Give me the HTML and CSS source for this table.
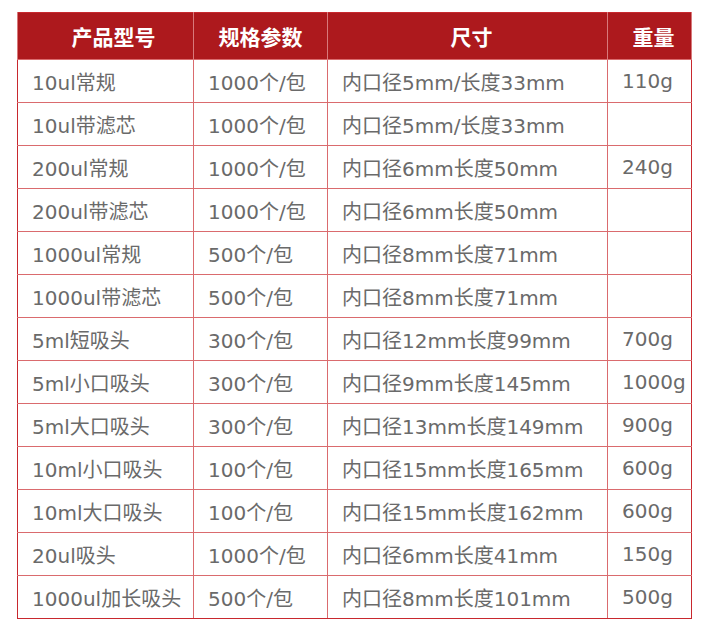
FILE: index.html
```html
<!DOCTYPE html>
<html lang="zh">
<head>
<meta charset="utf-8">
<link rel="stylesheet" href="styles.css">
</head>
<body>
<table class="spec">
  <colgroup>
    <col class="c1"><col class="c2"><col class="c3"><col class="c4">
  </colgroup>
  <thead>
    <tr><th class="h1">产品型号</th><th class="h2">规格参数</th><th class="h3">尺寸</th><th class="h4">重量</th></tr>
  </thead>
  <tbody>
    <tr><td>10ul常规</td><td>1000个/包</td><td>内口径5mm/长度33mm</td><td>110g</td></tr>
    <tr><td>10ul带滤芯</td><td>1000个/包</td><td>内口径5mm/长度33mm</td><td></td></tr>
    <tr><td>200ul常规</td><td>1000个/包</td><td>内口径6mm长度50mm</td><td>240g</td></tr>
    <tr><td>200ul带滤芯</td><td>1000个/包</td><td>内口径6mm长度50mm</td><td></td></tr>
    <tr><td>1000ul常规</td><td>500个/包</td><td>内口径8mm长度71mm</td><td></td></tr>
    <tr><td>1000ul带滤芯</td><td>500个/包</td><td>内口径8mm长度71mm</td><td></td></tr>
    <tr><td>5ml短吸头</td><td>300个/包</td><td>内口径12mm长度99mm</td><td>700g</td></tr>
    <tr><td>5ml小口吸头</td><td>300个/包</td><td>内口径9mm长度145mm</td><td>1000g</td></tr>
    <tr><td>5ml大口吸头</td><td>300个/包</td><td>内口径13mm长度149mm</td><td>900g</td></tr>
    <tr><td>10ml小口吸头</td><td>100个/包</td><td>内口径15mm长度165mm</td><td>600g</td></tr>
    <tr><td>10ml大口吸头</td><td>100个/包</td><td>内口径15mm长度162mm</td><td>600g</td></tr>
    <tr><td>20ul吸头</td><td>1000个/包</td><td>内口径6mm长度41mm</td><td>150g</td></tr>
    <tr><td>1000ul加长吸头</td><td>500个/包</td><td>内口径8mm长度101mm</td><td>500g</td></tr>
  </tbody>
</table>
</body>
</html>
```
FILE: styles.css
```css
html, body {
  margin: 0;
  background: #ffffff;
}
body {
  padding: 12px 0 0 17px;
  font-family: "Noto Sans CJK SC", "Noto Sans", sans-serif;
}
.spec {
  border-collapse: collapse;
  table-layout: fixed;
  width: 674px;
  border: 1px solid #c8282e;
}
.c1 { width: 176px; }
.c2 { width: 134px; }
.c3 { width: 280px; }
.c4 { width: 84px; }
.spec th {
  background: #ad191d;
  color: #ffffff;
  font-weight: 700;
  font-size: 21px;
  height: 47px;
  padding: 0;
  text-align: center;
  border-left: 1px solid #d8797b;
  border-right: 1px solid #d8797b;
  box-sizing: border-box;
}
.spec th.h1 { padding-left: 16px; }
.spec th.h3 { padding-left: 8px; }
.spec th.h4 { padding-left: 8px; }
.spec td {
  height: 43px;
  box-sizing: border-box;
  padding: 0 0 0 14px;
  font-family: "DejaVu Sans", "Noto Sans CJK SC", sans-serif;
  font-size: 20px;
  color: #6a6a6a;
  border: 1px solid #da6b6e;
  white-space: nowrap;
  overflow: hidden;
}
.spec tbody tr:last-child td { border-bottom-color: #c8282e; }
.spec td:first-child { border-left-color: #c8282e; }
.spec td:last-child { border-right-color: #c8282e; }
```
